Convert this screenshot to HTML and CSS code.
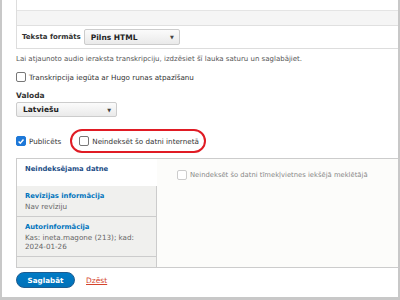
FILE: index.html
```html
<!DOCTYPE html>
<html lang="lv">
<head>
    <meta charset="UTF-8">
    <title>Rediģēt datni</title>
    <link rel="stylesheet" href="styles.css">
</head>
<body>
    <div class="frame">

        <!-- Editor -->
        <div class="editor">
            <div class="ed-top"></div>
            <div class="ed-toolbar"></div>
            <div class="ed-format">
                <span class="label">Teksta formāts</span>
                <div class="select select-format">Pilns HTML <span class="arrow">▼</span></div>
            </div>
        </div>
        <div class="description">Lai atjaunoto audio ieraksta transkripciju, izdzēsiet šī lauka saturu un saglabājiet.</div>

        <div class="check-row transcript">
            <span class="box"></span>
            <span>Transkripcija iegūta ar Hugo runas atpazīšanu</span>
        </div>

        <div class="field-label">Valoda</div>
        <div class="select select-lang">Latviešu <span class="arrow">▼</span></div>

        <div class="publish-row">
            <div class="check-row">
                <span class="box checked">
                    <svg width="9" height="9" viewBox="0 0 9 9"><path d="M1.8 4.6 L3.7 6.5 L7.3 2.3" fill="none" stroke="#fff" stroke-width="1.6"/></svg>
                </span>
                <span>Publicēts</span>
            </div>
            <div class="highlight">
                <div class="check-row">
                    <span class="box"></span>
                    <span>Neindeksēt šo datni internetā</span>
                </div>
            </div>
        </div>

        <!-- Vertical tabs -->
        <div class="vtabs">
            <ul class="vtab-list">
                <li class="vtab active"><a>Neindeksējama datne</a></li>
                <li class="vtab">
                    <a>Revīzijas informācija</a>
                    <div class="summary">Nav revīziju</div>
                </li>
                <li class="vtab">
                    <a>Autorinformācija</a>
                    <div class="summary">Kas: ineta.magone (213); kad: 2024-01-26</div>
                </li>
                <li class="vtab rest"></li>
            </ul>
            <div class="vtab-pane">
                <div class="check-row disabled">
                    <span class="box"></span>
                    <span>Neindeksēt šo datni tīmekļvietnes iekšējā meklētājā</span>
                </div>
            </div>
        </div>

        <div class="actions">
            <button class="btn-save">Saglabāt</button>
            <a class="delete">Dzēst</a>
        </div>
    </div>
</body>
</html>
```

FILE: styles.css
```css
body {
    margin: 0;
    font-family: 'DejaVu Sans', Verdana, sans-serif;
    font-size: 7px;
    color: #333;
    background: #fff;
}

.frame {
    height: 300px;
    box-sizing: border-box;
    border-left: 2px solid #c8c8c8;
    border-right: 2px solid #c8c8c8;
    border-bottom: 3px solid #c8c8c8;
    padding-left: 14px;
    overflow: hidden;
}

/* Editor */
.editor {
    border-left: 1px solid #ddd;
    border-bottom: 1px solid #ddd;
}

.ed-top {
    height: 10px;
    border-bottom: 1px solid #e4e4e4;
}

.ed-toolbar {
    height: 14px;
    background: #f5f5f5;
    border-bottom: 1px solid #e0e0e0;
}

.ed-format {
    height: 22px;
    display: flex;
    align-items: center;
    padding-left: 5px;
    gap: 3px;
}

.label {
    font-weight: bold;
    font-size: 7px;
}

.select {
    box-sizing: border-box;
    height: 16px;
    display: flex;
    align-items: center;
    justify-content: space-between;
    padding: 0 5px 0 6px;
    border: 1px solid #ccc;
    border-radius: 2px;
    background: linear-gradient(#fbfbfb, #eaeaea);
    font-size: 7.5px;
    font-weight: bold;
    color: #222;
}

.select-format {
    width: 96px;
}

.arrow {
    font-size: 5px;
    color: #444;
}

.description {
    margin-top: 6px;
    font-size: 7px;
    color: #555;
}

.check-row {
    display: flex;
    align-items: center;
    gap: 3px;
    font-size: 7.2px;
}

.box {
    width: 8px;
    height: 8px;
    border: 1px solid #777;
    border-radius: 2px;
    background: #fff;
    display: flex;
    align-items: center;
    justify-content: center;
}

.box.checked {
    border-color: #1d78d8;
    background: #1d78d8;
}

.transcript {
    margin-top: 9px;
}

.field-label {
    margin-top: 9px;
    font-weight: bold;
    font-size: 7.5px;
}

.select-lang {
    width: 101px;
    height: 15px;
    margin-top: 2px;
}

.publish-row {
    display: flex;
    align-items: center;
    margin-top: 12px;
    gap: 9px;
}

.highlight {
    width: 136px;
    height: 24px;
    box-sizing: border-box;
    border: 2px solid #e01b24;
    border-radius: 12px;
    display: flex;
    align-items: center;
    padding-left: 7px;
}

/* Vertical tabs */
.vtabs {
    display: flex;
    margin-top: 5px;
    height: 108px;
    border: 1px solid #ccc;
    border-right: 0;
}

.vtab-list {
    list-style: none;
    margin: 0;
    padding: 0;
    width: 140px;
    display: flex;
    flex-direction: column;
    background: #fff;
}

.vtab {
    background: #f0f0ee;
    border-bottom: 1px solid #ccc;
    border-right: 1px solid #ccc;
    padding: 6px 8px 5px 8px;
}

.vtab a {
    display: block;
    color: #0074bd;
    font-weight: bold;
    font-size: 6.8px;
}

.vtab.active {
    background: #fff;
    border-right: 0;
    border-bottom: 0;
    height: 16px;
    padding-top: 6px;
}

.vtab.active a {
    color: #1d4e86;
}

.vtab.rest {
    flex: 1;
    border-bottom: 0;
    padding: 0;
}

.summary {
    margin-top: 2px;
    color: #666;
    font-size: 7.2px;
}

.vtab-pane {
    flex: 1;
    background: #fcfcfa;
    padding: 11px 0 0 20px;
}

.check-row.disabled {
    color: #888;
    font-size: 6.8px;
}

.check-row.disabled .box {
    border-color: #ccc;
}

/* Actions */
.actions {
    display: flex;
    align-items: center;
    gap: 11px;
    margin-top: 4px;
}

.btn-save {
    width: 59px;
    height: 16px;
    border: 1px solid #1e5c90;
    border-radius: 9px;
    background: linear-gradient(#007bc6, #0071b8);
    color: #fff;
    font-family: inherit;
    font-weight: bold;
    font-size: 7.2px;
}

.delete {
    color: #d4442c;
    text-decoration: underline;
    font-size: 7.5px;
}
```
